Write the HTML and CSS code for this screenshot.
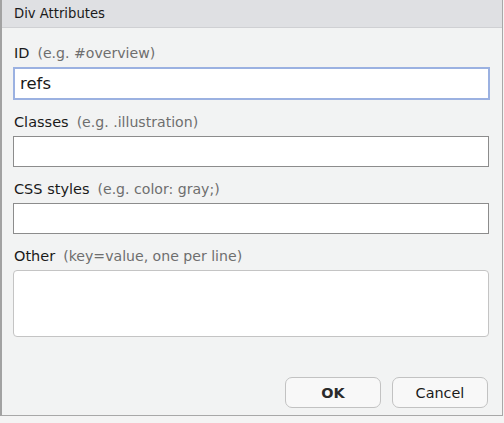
FILE: index.html
```html
<!DOCTYPE html>
<html>
<head>
<meta charset="utf-8">
<link rel="stylesheet" href="styles.css">
</head>
<body>
<div class="dialog">
  <div class="titlebar">Div Attributes</div>
  <div class="content">
    <div class="field">
      <div class="label">ID<span class="hint">(e.g. #overview)</span></div>
      <div class="input focused">refs</div>
    </div>
    <div class="field">
      <div class="label">Classes<span class="hint">(e.g. .illustration)</span></div>
      <div class="input"></div>
    </div>
    <div class="field">
      <div class="label">CSS styles<span class="hint">(e.g. color: gray;)</span></div>
      <div class="input"></div>
    </div>
    <div class="field">
      <div class="label">Other<span class="hint">(key=value, one per line)</span></div>
      <div class="textarea"></div>
    </div>
  </div>
  <div class="buttons">
    <button class="btn primary">OK</button>
    <button class="btn">Cancel</button>
  </div>
</div>
</body>
</html>
```
FILE: styles.css
```css
html, body {
  margin: 0;
  padding: 0;
  background: #f4f4f4;
  width: 504px;
  height: 423px;
  overflow: hidden;
}
body {
  font-family: "DejaVu Sans", "Liberation Sans", sans-serif;
  color: #1a1a1a;
}
.dialog {
  width: 500px;
  height: 415px;
  border-left: 2px solid #a2a2a2;
  border-right: 1px solid #a8a8a8;
  border-bottom: 1px solid #a8a8a8;
  background: #f2f3f3;
  display: flex;
  flex-direction: column;
}
.titlebar {
  height: 27px;
  background: #dfe0e3;
  border-bottom: 1px solid #cfd0d3;
  font-size: 13.2px;
  line-height: 28px;
  padding-left: 12px;
}
.content {
  padding: 17px 14px 0 11px;
  display: flex;
  flex-direction: column;
}
.field {
  display: flex;
  flex-direction: column;
}
.label {
  font-size: 14.5px;
  height: 16px;
  line-height: 16px;
  margin-bottom: 6px;
  padding-left: 1px;
  white-space: nowrap;
}
.hint {
  color: #6e6e6e;
  font-size: 14.1px;
  margin-left: 8px;
}
.input {
  height: 29px;
  border: 1px solid #8c8c8c;
  background: #fff;
  margin-bottom: 14px;
  font-size: 16.5px;
  line-height: 29px;
  padding-left: 6px;
  width: 468px;
}
.input.focused {
  border: 2px solid #9bb1e1;
  padding-left: 5px;
}
.textarea {
  height: 65px;
  border: 1px solid #c4c4c4;
  border-radius: 4px;
  background: #fff;
  width: 474px;
}
.buttons {
  margin-top: auto;
  display: flex;
  justify-content: flex-end;
  gap: 11px;
  padding: 0 14px 7px 0;
}
.btn {
  width: 96px;
  height: 31px;
  border: 1px solid #c2c2c2;
  border-radius: 7px;
  background: #f8f8f8;
  font-family: "DejaVu Sans", "Liberation Sans", sans-serif;
  font-size: 14.4px;
  color: #1a1a1a;
  padding: 0;
}
.btn.primary {
  font-weight: bold;
  color: #2a2a2a;
}
```
